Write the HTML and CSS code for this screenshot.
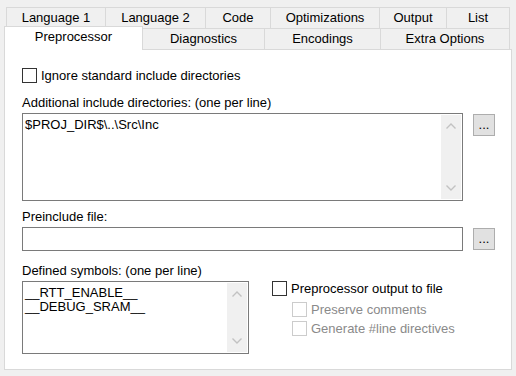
FILE: index.html
```html
<!DOCTYPE html>
<html lang="en">
<head>
  <meta charset="UTF-8">
  <meta name="viewport" content="width=device-width, initial-scale=1.0">
  <title>Options - Preprocessor</title>
  <link rel="stylesheet" href="styles.css">
</head>
<body>
  <div class="dialog">

    <!-- Onglets sur deux rangées -->
    <div class="tabs">
      <div class="tab-row">
        <div class="tab tab-lang1">Language 1</div>
        <div class="tab tab-lang2">Language 2</div>
        <div class="tab tab-code">Code</div>
        <div class="tab tab-optim">Optimizations</div>
        <div class="tab tab-output">Output</div>
        <div class="tab tab-list">List</div>
      </div>
      <div class="tab-row">
        <div class="tab tab-pre active">Preprocessor</div>
        <div class="tab tab-diag">Diagnostics</div>
        <div class="tab tab-enc">Encodings</div>
        <div class="tab tab-extra">Extra Options</div>
      </div>
    </div>

    <!-- Page Preprocessor -->
    <div class="panel">
      <div class="check">
        <span class="box"></span>Ignore standard include directories
      </div>

      <div class="field-label label-dirs">Additional include directories: (one per line)</div>
      <div class="field-row">
        <div class="edit edit-dirs">
          <div class="edit-text">$PROJ_DIR$\..\Src\Inc</div>
          <div class="scroll">
            <svg width="20" height="22" viewBox="0 0 20 22"><polyline points="5.5,13.5 10,9 14.5,13.5" /></svg>
            <svg width="20" height="22" viewBox="0 0 20 22"><polyline points="5.5,8.5 10,13 14.5,8.5" /></svg>
          </div>
        </div>
        <button class="browse">...</button>
      </div>

      <div class="field-label label-file">Preinclude file:</div>
      <div class="field-row">
        <div class="edit edit-file"></div>
        <button class="browse">...</button>
      </div>

      <div class="field-label label-defs">Defined symbols: (one per line)</div>
      <div class="bottom-row">
        <div class="edit edit-defs">
          <div class="edit-text">__RTT_ENABLE__<br>__DEBUG_SRAM__</div>
          <div class="scroll">
            <svg width="20" height="22" viewBox="0 0 20 22"><polyline points="5.5,13.5 10,9 14.5,13.5" /></svg>
            <svg width="20" height="22" viewBox="0 0 20 22"><polyline points="5.5,8.5 10,13 14.5,8.5" /></svg>
          </div>
        </div>

        <div class="output-group">
          <div class="check">
            <span class="box"></span>Preprocessor output to file
          </div>
          <div class="check sub disabled">
            <span class="box"></span>Preserve comments
          </div>
          <div class="check sub disabled last">
            <span class="box"></span>Generate #line directives
          </div>
        </div>
      </div>
    </div>

  </div>
</body>
</html>
```

FILE: styles.css
```css
* {
  margin: 0;
  padding: 0;
  box-sizing: border-box;
}

body {
  background: #f0f0f0;
  font-family: "Liberation Sans", Arial, sans-serif;
  font-size: 13px;
  color: #000;
}

.dialog {
  padding: 7px 0 0 4px;
  width: 512px;
}

/* Onglets */
.tabs {
  padding-left: 2px;
}

.tab-row {
  display: flex;
  align-items: flex-start;
  height: 21px;
}

.tab {
  height: 21px;
  border-top: 1px solid #d9d9d9;
  border-left: 1px solid #d9d9d9;
  line-height: 20px;
  text-align: center;
  white-space: nowrap;
}

.tab:last-child {
  border-right: 1px solid #d9d9d9;
}

.tab-lang1 { width: 99px; }
.tab-lang2 { width: 100px; }
.tab-code { width: 65px; }
.tab-optim { width: 109px; }
.tab-output { width: 67px; }
.tab-list { width: 64px; }

.tab-diag { width: 121px; }
.tab-enc { width: 116px; }
.tab-extra { width: 130px; }

.tab.active {
  position: relative;
  z-index: 1;
  width: 139px;
  height: 24px;
  margin: -2px 0 0 -2px;
  border-right: 1px solid #d9d9d9;
  background: #fff;
}

.tab.active + .tab {
  border-left: 0;
}

/* Page */
.panel {
  width: 508px;
  height: 321px;
  border: 1px solid #d9d9d9;
  background: #fff;
  padding: 18px 0 0 17px;
}

.check {
  display: flex;
  align-items: center;
  height: 15px;
  white-space: nowrap;
}

.box {
  width: 15px;
  height: 15px;
  border: 1px solid #333;
  background: #fff;
  margin-right: 4px;
  flex-shrink: 0;
}

.check.sub {
  margin-left: 20px;
  margin-top: 6px;
}

.check.sub.last {
  margin-top: 4px;
}

.check.disabled {
  color: #8a8a8a;
}

.check.disabled .box {
  border-color: #cccccc;
}

.field-label {
  line-height: 15px;
  margin-bottom: 3px;
}

.label-dirs { margin-top: 12px; }
.label-file { margin-top: 8px; }
.label-defs { margin-top: 12px; }

.field-row {
  display: flex;
  align-items: flex-start;
}

.edit {
  border: 1px solid #7a7a7a;
  background: #fff;
  display: flex;
}

.edit-dirs {
  width: 441px;
  height: 88px;
}

.edit-file {
  width: 441px;
  height: 24px;
}

.edit-defs {
  width: 227px;
  height: 73px;
}

.edit-text {
  flex: 1;
  padding: 4px 2px;
  line-height: 14px;
  white-space: nowrap;
}

.scroll {
  width: 20px;
  margin: 1px 1px 1px 0;
  background: #f0f0f0;
  display: flex;
  flex-direction: column;
  justify-content: space-between;
}

.scroll svg {
  display: block;
}

.scroll polyline {
  fill: none;
  stroke: #c2c2c2;
  stroke-width: 1.4;
}

.browse {
  width: 22px;
  height: 22px;
  margin: 1px 0 0 10px;
  background: #e1e1e1;
  border: 1px solid #adadad;
  font-family: "Liberation Sans", Arial, sans-serif;
  font-size: 13px;
  line-height: 16px;
  color: #000;
}

.bottom-row {
  display: flex;
  align-items: flex-start;
}

.output-group {
  margin-left: 23px;
}
```
